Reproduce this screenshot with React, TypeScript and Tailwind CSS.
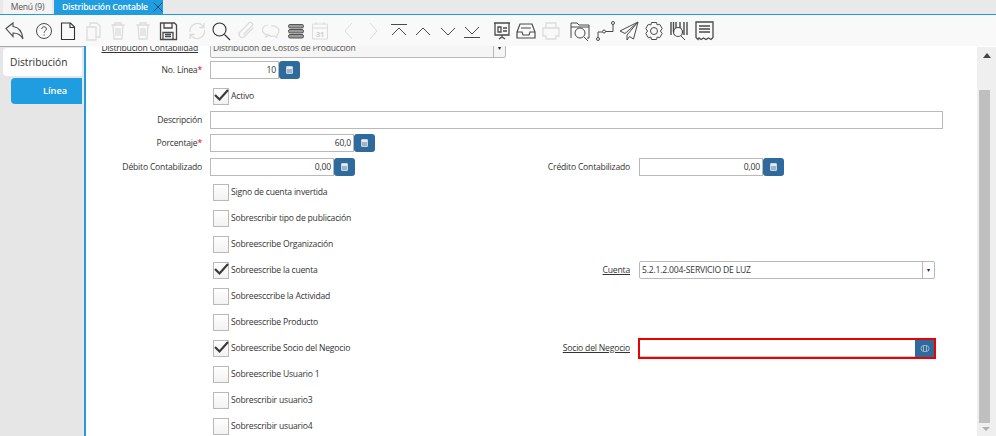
import type { ReactNode } from "react";

const font = { fontFamily: '"Open Sans", "Noto Sans", sans-serif' };

function Ico({ children, x, off }: { children: ReactNode; x: number; off?: boolean }) {
  return (
    <div className="flex h-[31px] w-[24px] shrink-0 items-center justify-center" style={{ marginLeft: x }}>
      <svg width="24" height="24" viewBox="0 0 24 24" fill="none" stroke={off ? "#dcdcdc" : "#4a4a4a"} strokeWidth="1">
        {children}
      </svg>
    </div>
  );
}

function Toolbar() {
  return (
    <div className="flex h-[31px] shrink-0 items-center bg-[#f9f9f9] pl-[2px]">
      <Ico x={0}><path d="M4 9.500 11 4v3.500c5 .5 9 4 10 12.500-2-4-5-6-10-6v3.500z" strokeWidth="1.100" /></Ico>
      <Ico x={6}><circle cx="12" cy="12" r="7.500" /><path d="M9.800 10c0-3 4.600-3 4.600 0 0 1.800-2.300 1.800-2.300 3.800M12.100 15.300v1.200" /></Ico>
      <Ico x={0}><path d="M5.500 4h9l4 4v12.500h-13zM14 4v4.500h4.500" stroke="#333" strokeWidth="1.100" /></Ico>
      <Ico x={1} off><path d="M6 8h9v13H6zM9 8V4h7l3 3v11h-4" strokeWidth="1.300" /></Ico>
      <Ico x={1} off><path d="M5.500 6h13M9 6V4h6v2M7 6l1 14h8l1-14M10 9v8M12 9v8M14 9v8" strokeWidth="1.300" /></Ico>
      <Ico x={1} off><path d="M5.500 6h13M9 6V4h6v2M7 6l1 14h8l1-14M10 9v8M12 9v8M14 9v8" strokeWidth="1.300" /></Ico>
      <Ico x={1}><path d="M4.500 4h14l2 2v14.500h-16zM8 4v5h8V4M7 20.500v-7h10v7M9 15.500h6M9 17.500h6" strokeWidth="1.300" /></Ico>
      <Ico x={5} off><path d="M5 13a7.500 7.500 0 0 1 12.500-6.500L19 8M19 4v4.500h-4.500M19.500 11A7.500 7.500 0 0 1 7 17.500L5 15.500M5 20v-4.500h4.500" strokeWidth="1.300" /></Ico>
      <Ico x={0}><circle cx="10.500" cy="10.500" r="6.500" stroke="#333" strokeWidth="1.100" /><path d="m15.500 15.500 5.500 5.500" stroke="#333" strokeWidth="1.100" /></Ico>
      <Ico x={1} off><path d="m19 9-8.500 8.500a3 3 0 0 1-4.500-4.500L15 4a2 2 0 0 1 3 3l-8.500 8.500" strokeWidth="1.300" /></Ico>
      <Ico x={1} off><path d="M12 7a6.500 5 0 0 1 8 5c0 2-1 3-2 4v2.500l-3-1.500a7 7 0 0 1-7-2M9 6a6 5 0 0 0-2 9.500V18l2.500-1.500" strokeWidth="1.200" /></Ico>
      <Ico x={1}>
        <rect x="4.500" y="5.500" width="15" height="3.500" rx="1.500" fill="#9a9a9a" stroke="#555" />
        <rect x="4.500" y="10.500" width="15" height="3.500" rx="1.500" fill="#9a9a9a" stroke="#555" />
        <rect x="4.500" y="15.500" width="15" height="3.500" rx="1.500" fill="#9a9a9a" stroke="#555" />
      </Ico>
      <Ico x={0} off><path d="M4.500 5h15v15h-15zM4.500 9h15M8 3v3M16 3v3" /><text x="12" y="18" fontSize="7.500" textAnchor="middle" fill="#d0d0d0" stroke="none" fontWeight="700">31</text></Ico>
      <Ico x={5} off><path d="m15 4-7 8 7 8" /></Ico>
      <Ico x={0} off><path d="m9 4 7 8-7 8" /></Ico>
      <Ico x={2}><path d="M4 5.500h16M5 16l7-7 7 7" /></Ico>
      <Ico x={0}><path d="m5 16 7-7 7 7" /></Ico>
      <Ico x={1}><path d="m5 9 7 7 7-7" /></Ico>
      <Ico x={0}><path d="m5 8 7 7 7-7M4 18.500h16" /></Ico>
      <Ico x={6}><path d="M4 4h16M5 4v12h14V4M8 8h3v5H8zM13 9h4M13 12h4M12 16v2M9 20l3-2 3 2" strokeWidth="1.300" /></Ico>
      <Ico x={0}><path d="M6 5h12l3 8v6H3v-6zM3 13h5l1 3h6l1-3h5M7 9h10" strokeWidth="1.200" /></Ico>
      <Ico x={1} off><path d="M7 9V4h10v5M4 9h16v8h-3v3H7v-3H4z" strokeWidth="1.300" /></Ico>
      <Ico x={5}><path d="M3 19V4h6l2 2h10v13h-2M3 8h18" /><circle cx="12" cy="14" r="5" /><path d="m16 18 4 4" /></Ico>
      <Ico x={1}><circle cx="5" cy="20" r="1.500" /><circle cx="11" cy="12.500" r="1.500" /><circle cx="20" cy="4" r="1.500" /><path d="M5 18.500V13h4.500M12.500 12.500H20V5.500" /></Ico>
      <Ico x={0}><path d="M21 3 3 12l5 2.500L21 3 10 16v5l2.500-3.500 4 2.500z" /></Ico>
      <Ico x={1}><path d="M9.500 3.500h5l.7 2.500 2.500-.7 2.500 4.200-1.800 2.500 1.800 2.500-2.500 4.200-2.500-.7-.7 2.500h-5l-.7-2.500-2.500.7L3.800 14.500 5.600 12 3.800 9.500l2.500-4.200 2.500.7z" /><circle cx="12" cy="12" r="3.500" /></Ico>
      <Ico x={1}><path d="M4 3v13M6.500 3v10M9 3v6M13 3v6M17 3v13M20 3v13" strokeWidth="1.400" /><circle cx="11" cy="13" r="4.500" strokeWidth="1.200" /><path d="m14 17 4 4" /></Ico>
      <Ico x={1}><path d="M4 3h17v15.500l-2 2-2.500-1.500-2.500 1.500-2.500-1.500-2.500 1.500-2-1.500-1 1.500-2-2z" strokeWidth="1.300" /><path d="M7 7h11M7 10h11M7 13h11" strokeWidth="1.600" /></Ico>
    </div>
  );
}

function CalcBtn() {
  return (
    <div className="flex h-[18px] w-[21px] items-center justify-center rounded-[3px] bg-[#2f6a9c]">
      <div className="h-[8px] w-[7px] rounded-[1px] border border-[#c9d6e2] bg-[#9db5ca]">
        <div className="h-[2px] bg-[#e4ebf1]" />
      </div>
    </div>
  );
}

function NumField({ w, value }: { w: string; value: string }) {
  return (
    <div className="flex items-center">
      <div className={`${w} flex h-[18px] items-center justify-end border border-[#b9b9b9] bg-white pr-[2px] text-[#333]`}>{value}</div>
      <CalcBtn />
    </div>
  );
}

function Label({ children, req, w = "w-[202px]" }: { children: string; req?: boolean; w?: string }) {
  return (
    <div className={`${w} shrink-0 text-right text-[#333]`}>
      <span>{children}</span>
      {req && <span className="text-[#e00000]">*</span>}
    </div>
  );
}

function Check({ label, on }: { label: string; on?: boolean }) {
  return (
    <div className="ml-[213px] flex items-center">
      <div className="relative h-[17px] w-[16px] shrink-0 border border-[#b9b9b9] bg-gradient-to-b from-white to-[#f2f2f2]">
        {on && (
          <svg className="absolute -top-[1px] -left-[1px]" width="16" height="16" viewBox="0 0 16 16" fill="none" stroke="#3a3a3a" strokeWidth="2.200">
            <path d="m2 7 4.500 4.500L15 2" />
          </svg>
        )}
      </div>
      <span className="ml-[2px] text-[#333]">{label}</span>
    </div>
  );
}

function Row({ h, children }: { h: string; children: ReactNode }) {
  return <div className={`${h} flex items-center`}>{children}</div>;
}

export default function App() {
  return (
    <div className="flex h-[436px] w-[996px] flex-col overflow-hidden whitespace-nowrap bg-white text-[8.6px] leading-none tracking-[-0.2px]" style={font}>
      {/* tabs */}
      <div className="flex h-[15px] shrink-0 items-end border-b border-[#1f9de0] bg-[#e9e9e9]">
        <div className="ml-[3px] flex h-[14px] w-[49px] items-center justify-center bg-[#f4f4f4] text-[#555]">Menú (9)</div>
        <div className="ml-[2px] flex h-[14px] w-[109px] items-center bg-[#1f9de0] pl-[8px] text-white">
          <span className="w-[88px] font-semibold">Distribución Contable</span>
          <svg className="ml-[3px]" width="10" height="10" viewBox="0 0 10 10" stroke="#174a6c" strokeWidth="0.900">
            <path d="m0.500 0.500 9 9M9.500 0.500l-9 9" />
          </svg>
        </div>
      </div>
      <Toolbar />
      <div className="flex min-h-0 flex-1">
        {/* side tabs */}
        <div className="w-[84px] shrink-0 border-t border-[#a8a8a8] bg-[#e6e6e6] pt-[1px]">
          <div className="ml-[3px] mr-[2px] flex h-[28px] items-center rounded-l-[4px] rounded-br-[2px] bg-white pl-[7px] text-[10.200px] tracking-normal text-[#333]">Distribución</div>
          <div className="ml-[11px] mr-[2px] mt-[2px] flex h-[26px] items-center rounded-l-[4px] bg-[#1f9de0] pl-[32px] text-[9.200px] font-semibold tracking-normal text-white">Línea</div>
        </div>
        <div className="w-[2px] shrink-0 bg-[#1f9de0]" />
        {/* form */}
        <div className="min-w-0 flex-1 overflow-hidden">
          <div className="-ml-[86px] -mt-[8px] w-[977px]">
            <Row h="h-[20px]">
              <div className="w-[198px] shrink-0 text-right text-[#333] underline">Distribución Contabilidad</div>
              <div className="ml-[12px] flex h-[19px] w-[296px] items-center justify-between rounded-[2px] border border-[#b9b9b9] bg-[#f5f5f5] pl-[2px] text-[#555]">
                Distribución de Costos de Producción
                <span className="flex h-full w-[12px] items-center justify-center border-l border-[#b9b9b9] text-[6px] text-[#222]">▾</span>
              </div>
            </Row>
            <Row h="h-[24px]">
              <Label req>No. Línea</Label>
              <div className="ml-[8px]"><NumField w="w-[69px]" value="10" /></div>
            </Row>
            <Row h="h-[28px]"><Check label="Activo" on /></Row>
            <Row h="h-[20px]">
              <Label>Descripción</Label>
              <div className="ml-[8px] h-[18px] w-[733px] border border-[#b9b9b9] bg-white" />
            </Row>
            <Row h="h-[26px]">
              <Label req>Porcentaje</Label>
              <div className="ml-[8px]"><NumField w="w-[144px]" value="60,0" /></div>
            </Row>
            <div className="mb-[1px]">
              <Row h="h-[22px]">
                <Label>Débito Contabilizado</Label>
                <div className="ml-[8px]"><NumField w="w-[124px]" value="0,00" /></div>
                <Label w="w-[275px]">Crédito Contabilizado</Label>
                <div className="ml-[9px]"><NumField w="w-[124px]" value="0,00" /></div>
              </Row>
            </div>
            <Row h="h-[26px]"><Check label="Signo de cuenta invertida" /></Row>
            <Row h="h-[26px]"><Check label="Sobrescribir tipo de publicación" /></Row>
            <Row h="h-[26px]"><Check label="Sobreescribe Organización" /></Row>
            <Row h="h-[26px]">
              <Check label="Sobreescribe la cuenta" on />
              <div className="flex-1 text-right text-[#333]"><span className="underline">Cuenta</span></div>
              <div className="ml-[9px] mr-[42px] flex h-[18px] w-[296px] items-center justify-between rounded-[2px] border border-[#b9b9b9] bg-white pl-[2px] text-[#333]">
                5.2.1.2.004-SERVICIO DE LUZ
                <span className="flex h-full w-[12px] items-center justify-center border-l border-[#b9b9b9] text-[6px] text-[#222]">▾</span>
              </div>
            </Row>
            <Row h="h-[26px]"><Check label="Sobreesccribe la Actividad" /></Row>
            <Row h="h-[26px]"><Check label="Sobreescribe Producto" /></Row>
            <Row h="h-[26px]">
              <Check label="Sobreescribe Socio del Negocio" on />
              <div className="flex-1 text-right text-[#333]"><span className="underline">Socio del Negocio</span></div>
              <div className="ml-[8px] mr-[41px] flex h-[21px] w-[298px] border-2 border-[#ee0000] bg-white">
                <div className="flex-1 border-b border-[#c8c8c8]" />
                <div className="flex w-[19px] items-center justify-center bg-[#2f6a9c]">
                  <svg width="10" height="9" viewBox="0 0 10 9" fill="none" stroke="#9db5ca" strokeWidth="1">
                    <rect x="1" y="1.500" width="8" height="6" rx="3" /><path d="M3.500 2v5M6.500 2v5" />
                  </svg>
                </div>
              </div>
            </Row>
            <Row h="h-[26px]"><Check label="Sobreescribe Usuario 1" /></Row>
            <Row h="h-[26px]"><Check label="Sobrescribir usuario3" /></Row>
            <Row h="h-[26px]"><Check label="Sobrescribir usuario4" /></Row>
          </div>
        </div>
        {/* scrollbar */}
        <div className="mt-[1px] flex w-[19px] shrink-0 flex-col bg-[#efefef] pl-[2px]">
          <div className="ml-[4px] mt-[6px] h-0 w-0 border-x-[4px] border-b-[5px] border-x-transparent border-b-[#444]" />
          <div className="mt-[32px] h-[333px] w-[11px] bg-[#bfbfbf]" />
          <div className="ml-[3px] mt-[4px] h-0 w-0 border-x-[4px] border-t-[4px] border-x-transparent border-t-[#b0b0b0]" />
        </div>
      </div>
    </div>
  );
}
